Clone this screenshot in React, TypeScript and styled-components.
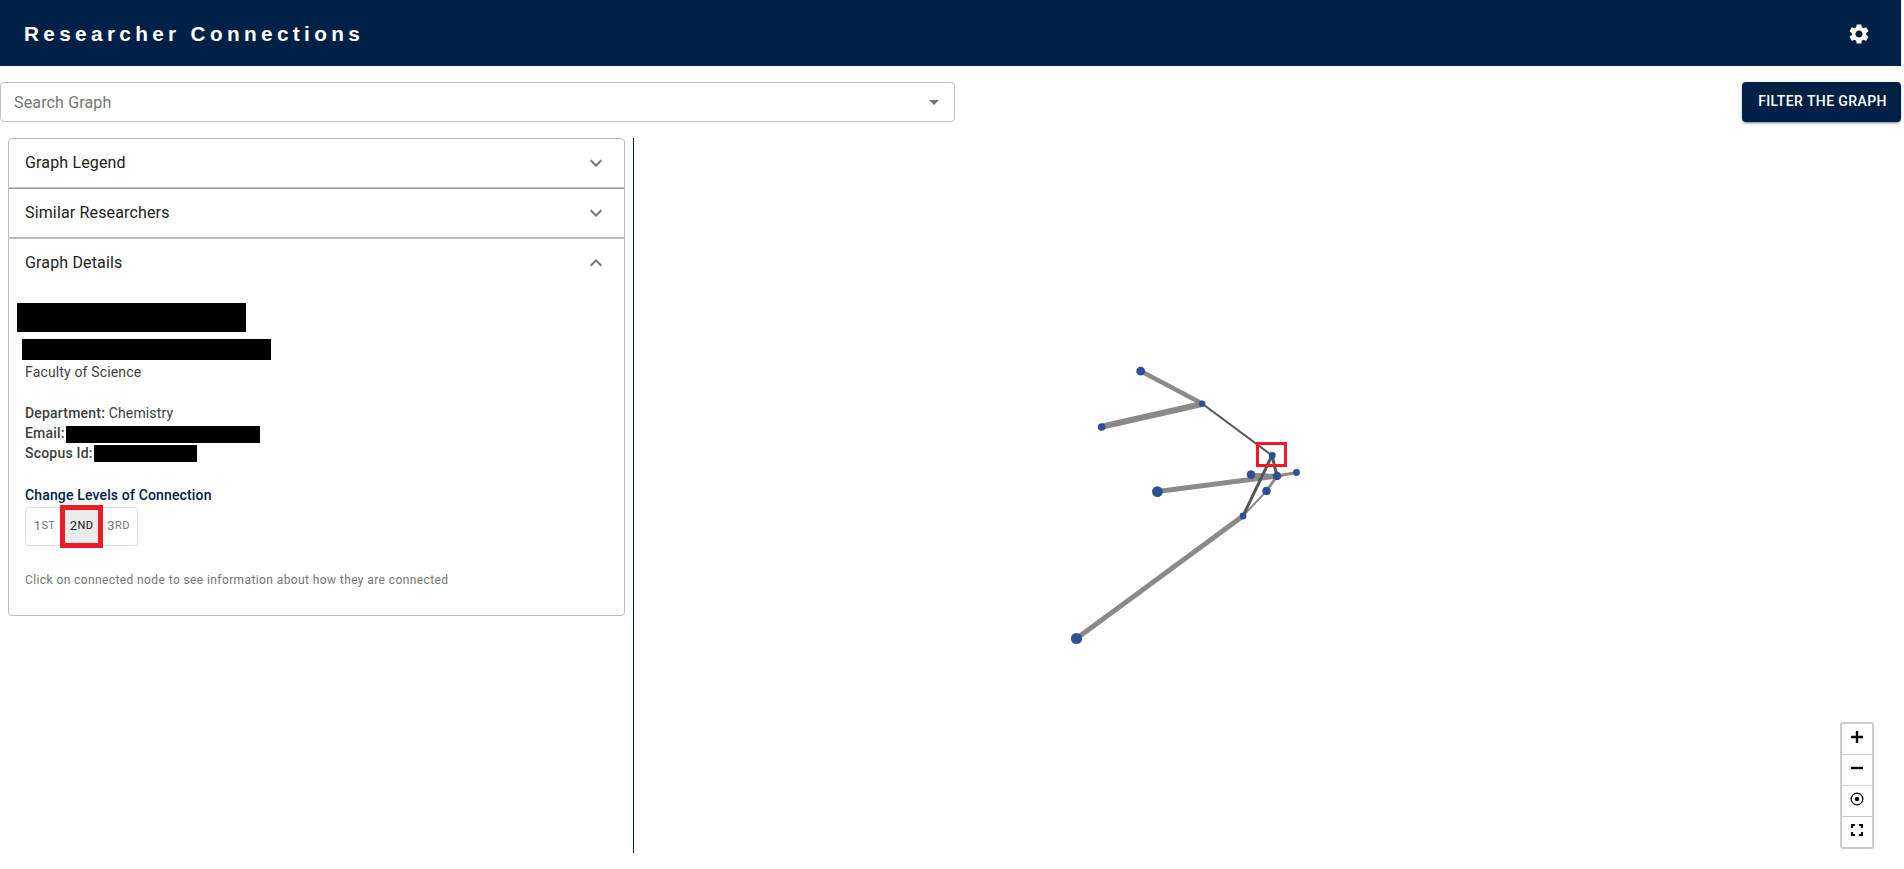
import React from "react";
import styled, { createGlobalStyle, css } from "styled-components";

const Global = createGlobalStyle`
  * { box-sizing: border-box; }
  body { margin: 0; background: #fff; font-family: Roboto, "Liberation Sans", sans-serif; overflow: hidden; }
`;

const Page = styled.div`
  width: 1901px;
  height: 869px;
  display: flex;
  flex-direction: column;
`;

const Header = styled.header`
  height: 66px;
  flex: none;
  background: #002145;
  display: flex;
  align-items: center;
  justify-content: space-between;
  padding: 2px 30px 0 24px;
`;

const Title = styled.h1`
  margin: 0;
  color: #fff;
  font: bold 20.8px/24px "Liberation Sans", Arial, sans-serif;
  letter-spacing: 4.32px;
`;

const Toolbar = styled.div`
  display: flex;
  justify-content: space-between;
  flex: none;
  height: 40px;
  margin: 16px 0;
`;

const SearchBox = styled.div`
  width: 955px;
  border: 1px solid #c0c0c0;
  border-radius: 4px;
  display: flex;
  align-items: center;
  justify-content: space-between;
  padding: 0 8px 0 13px;
  font-size: 16px;
  line-height: 24px;
  letter-spacing: 0.15px;
  color: #757575;
`;

const Placeholder = styled.span`
  padding-top: 2px;
`;

const FilterButton = styled.button`
  width: 159px;
  border: 0;
  border-radius: 4px;
  background: #002145;
  color: #fff;
  font: 500 14px/24px Roboto, sans-serif;
  letter-spacing: 0.4px;
  white-space: nowrap;
  padding: 0 0 2px 2px;
  box-shadow: 0 3px 1px -2px rgba(0, 0, 0, 0.2), 0 2px 2px 0 rgba(0, 0, 0, 0.14), 0 1px 5px 0 rgba(0, 0, 0, 0.12);
`;

const Main = styled.main`
  display: flex;
  height: 715px;
`;

const Sidebar = styled.aside`
  width: 634px;
  padding: 0 8px;
  border-right: 1px solid #002145;
`;

const Accordion = styled.section<{ $edge?: "top" | "bottom" }>`
  border: 1px solid #bbb;
  ${(p) => p.$edge === "top" && css`border-radius: 4px 4px 0 0;`}
  ${(p) => p.$edge === "bottom" && css`border-radius: 0 0 4px 4px;`}
  ${(p) => !p.$edge && css`border-top-color: #a5a5a5;`}
`;

const Summary = styled.div`
  height: 48px;
  padding: 0 16px;
  display: flex;
  align-items: center;
  justify-content: space-between;
  font-size: 16px;
  letter-spacing: 0.15px;
  color: #212121;
`;

const Heading = styled.span`
  padding-bottom: 2px;
`;

const Details = styled.div`
  height: 328px;
  padding: 16px 16px 0;
  font-size: 14px;
  line-height: 20px;
  letter-spacing: 0.15px;
  color: #404040;
`;

const Redacted = styled.div<{ $w: number; $h: number; $indent?: number; $above?: number; $below?: number }>`
  width: ${(p) => p.$w}px;
  height: ${(p) => p.$h}px;
  margin: ${(p) => p.$above ?? 0}px 0 ${(p) => p.$below ?? 0}px ${(p) => p.$indent ?? 0}px;
  background: #000;
`;

const Faculty = styled.div`
  margin-top: 2px;
  height: 41px;
`;

const Field = styled.div`
  display: flex;
  align-items: flex-start;
  height: 20px;
  white-space: pre;
`;

const Label = styled.span`
  font-weight: 500;
  letter-spacing: 0.2px;
`;

const LevelsTitle = styled.div`
  margin-top: 22px;
  font-weight: 500;
  color: #002145;
`;

const Levels = styled.div`
  display: flex;
  position: relative;
  width: 113px;
  height: 39px;
  margin-top: 2px;
  border: 1px solid #e0e0e0;
  border-radius: 4px;
`;

const Level = styled.button<{ $active?: boolean }>`
  flex: 1;
  border: 0;
  padding: 0 0 2px;
  background: ${(p) => (p.$active ? "#ebebeb" : "transparent")};
  color: ${(p) => (p.$active ? "#111" : "#757575")};
  font: 400 13px/22px Roboto, sans-serif;
  letter-spacing: 0.4px;
`;

const Ordinal = styled.span`
  font-size: 11px;
  vertical-align: 1px;
`;

const LevelMark = styled.span`
  position: absolute;
  left: 34px;
  top: -3px;
  width: 43px;
  height: 43px;
  border: 5px solid #ed1c24;
`;

const Hint = styled.p`
  margin: 24px 0 0;
  font-size: 12px;
  letter-spacing: 0.4px;
  color: #757575;
`;

const Canvas = styled.div`
  flex: 1;
  position: relative;
`;

const Drawing = styled.svg`
  display: block;
  width: 100%;
  height: 100%;
`;

const Controls = styled.div`
  position: absolute;
  right: 27px;
  top: 584px;
  width: 34px;
  border: 2px solid #ccc;
  border-radius: 3px;
`;

const Control = styled.button`
  display: flex;
  width: 30px;
  height: 31px;
  padding: 0 1px 4px 0;
  border: 0;
  border-bottom: 1px solid #ccc;
  background: #fff;
  align-items: center;
  justify-content: center;
  &:last-child { border-bottom: 0; height: 30px; }
`;

const Icon = ({ d, size = 24, fill = "#757575" }: { d: string; size?: number; fill?: string }) => (
  <svg width={size} height={size} viewBox="0 0 24 24" fill={fill}><path d={d} /></svg>
);

const GEAR = "M19.14 12.94c.04-.3.06-.61.06-.94 0-.32-.02-.64-.07-.94l2.03-1.58c.18-.14.23-.41.12-.61l-1.92-3.32c-.12-.22-.37-.29-.59-.22l-2.39.96c-.5-.38-1.03-.7-1.62-.94l-.36-2.54c-.04-.24-.24-.41-.48-.41h-3.84c-.24 0-.43.17-.47.41l-.36 2.54c-.59.24-1.13.57-1.62.94l-2.39-.96c-.22-.08-.47 0-.59.22L2.74 8.87c-.12.21-.08.47.12.61l2.03 1.58c-.05.3-.09.63-.09.94s.02.64.07.94l-2.03 1.58c-.18.14-.23.41-.12.61l1.92 3.32c.12.22.37.29.59.22l2.39-.96c.5.38 1.03.7 1.62.94l.36 2.54c.05.24.24.41.48.41h3.84c.24 0 .44-.17.47-.41l.36-2.54c.59-.24 1.13-.56 1.62-.94l2.39.96c.22.08.47 0 .59-.22l1.92-3.32c.12-.22.07-.47-.12-.61l-2.01-1.58zM12 15.6c-1.98 0-3.6-1.62-3.6-3.6s1.62-3.6 3.6-3.6 3.6 1.62 3.6 3.6-1.62 3.6-3.6 3.6z";
const DOWN = "M16.59 8.59 12 13.17 7.41 8.59 6 10l6 6 6-6z";
const UP = "m12 8-6 6 1.41 1.41L12 10.83l4.59 4.58L18 14z";

type Edge = [number, number, number, number, number, string];
const LIGHT = "#8a8a8a";
const DARK = "#555";
const edges: Edge[] = [
  [1140.5, 371, 1202, 403.5, 4.4, LIGHT],
  [1101.5, 426.7, 1202, 404, 6, LIGHT],
  [1157.5, 491.5, 1277, 476, 5, LIGHT],
  [1251, 474.8, 1277, 476, 4, LIGHT],
  [1277, 476, 1296.5, 472.5, 3, LIGHT],
  [1277, 476, 1266.5, 491, 3, LIGHT],
  [1266.5, 491, 1243, 516, 2, LIGHT],
  [1076.5, 638.5, 1243, 516, 5, LIGHT],
  [1202, 403.5, 1272, 455.5, 2, DARK],
  [1272, 455.5, 1277, 476, 3, DARK],
  [1272, 455.5, 1243, 516, 3, DARK],
];
const nodes: [number, number, number][] = [
  [1140.7, 371.2, 4.4], [1202.2, 403.8, 3.3], [1101.6, 427, 3.8], [1272.3, 455.5, 3.4],
  [1251, 474.6, 4.3], [1277, 476, 4.3], [1296.5, 472.5, 3.4], [1157.4, 491.6, 5.4],
  [1266.5, 491, 4.3], [1243, 516, 3.4], [1076.5, 638.5, 5.6],
];

export default function App() {
  return (
    <>
      <Global />
      <Page>
        <Header>
          <Title>Researcher Connections</Title>
          <Icon d={GEAR} fill="#fff" />
        </Header>
        <Toolbar>
          <SearchBox><Placeholder>Search Graph</Placeholder><Icon d="m7 10 5 5 5-5z" /></SearchBox>
          <FilterButton>FILTER THE GRAPH</FilterButton>
        </Toolbar>
        <Main>
          <Sidebar>
            <Accordion $edge="top"><Summary><Heading>Graph Legend</Heading><Icon d={DOWN} /></Summary></Accordion>
            <Accordion><Summary><Heading>Similar Researchers</Heading><Icon d={DOWN} /></Summary></Accordion>
            <Accordion $edge="bottom">
              <Summary><Heading>Graph Details</Heading><Icon d={UP} /></Summary>
              <Details>
                <Redacted $w={229} $h={29} $indent={-8} $below={7} />
                <Redacted $w={249} $h={21} $indent={-3} />
                <Faculty>Faculty of Science</Faculty>
                <Field><Label>Department:</Label> Chemistry</Field>
                <Field><Label>Email:</Label><Redacted $w={194} $h={17} $indent={1.5} $above={3} /></Field>
                <Field><Label>Scopus Id:</Label><Redacted $w={103} $h={17} $indent={1.5} $above={2} /></Field>
                <LevelsTitle>Change Levels of Connection</LevelsTitle>
                <Levels>
                  <Level>1<Ordinal>ST</Ordinal></Level>
                  <Level $active>2<Ordinal>ND</Ordinal></Level>
                  <Level>3<Ordinal>RD</Ordinal></Level>
                  <LevelMark />
                </Levels>
                <Hint>Click on connected node to see information about how they are connected</Hint>
              </Details>
            </Accordion>
          </Sidebar>
          <Canvas>
            <Drawing viewBox="634 138 1267 715">
              {edges.map(([x1, y1, x2, y2, w, c], i) => (
                <line key={i} x1={x1} y1={y1} x2={x2} y2={y2} strokeWidth={w} stroke={c} />
              ))}
              {nodes.map(([x, y, r], i) => <circle key={i} cx={x} cy={y} r={r} fill="#2c5094" />)}
              <rect x="1257.5" y="443.5" width="28" height="22" fill="none" stroke="#ed1c24" strokeWidth="3" />
            </Drawing>
            <Controls>
              <Control><svg width="12" height="12"><path d="M6 0v12M0 6h12" stroke="#000" strokeWidth="2.4" /></svg></Control>
              <Control><svg width="12" height="12"><path d="M0 6h12" stroke="#000" strokeWidth="2.4" /></svg></Control>
              <Control><svg width="14" height="14"><circle cx="7" cy="7" r="5.8" fill="none" stroke="#000" strokeWidth="1.3" /><circle cx="7" cy="7" r="2.2" /></svg></Control>
              <Control><svg width="12" height="12"><path d="M1 4V1h3M8 1h3v3M11 8v3H8M4 11H1V8" fill="none" stroke="#000" strokeWidth="2" /></svg></Control>
            </Controls>
          </Canvas>
        </Main>
      </Page>
    </>
  );
}
